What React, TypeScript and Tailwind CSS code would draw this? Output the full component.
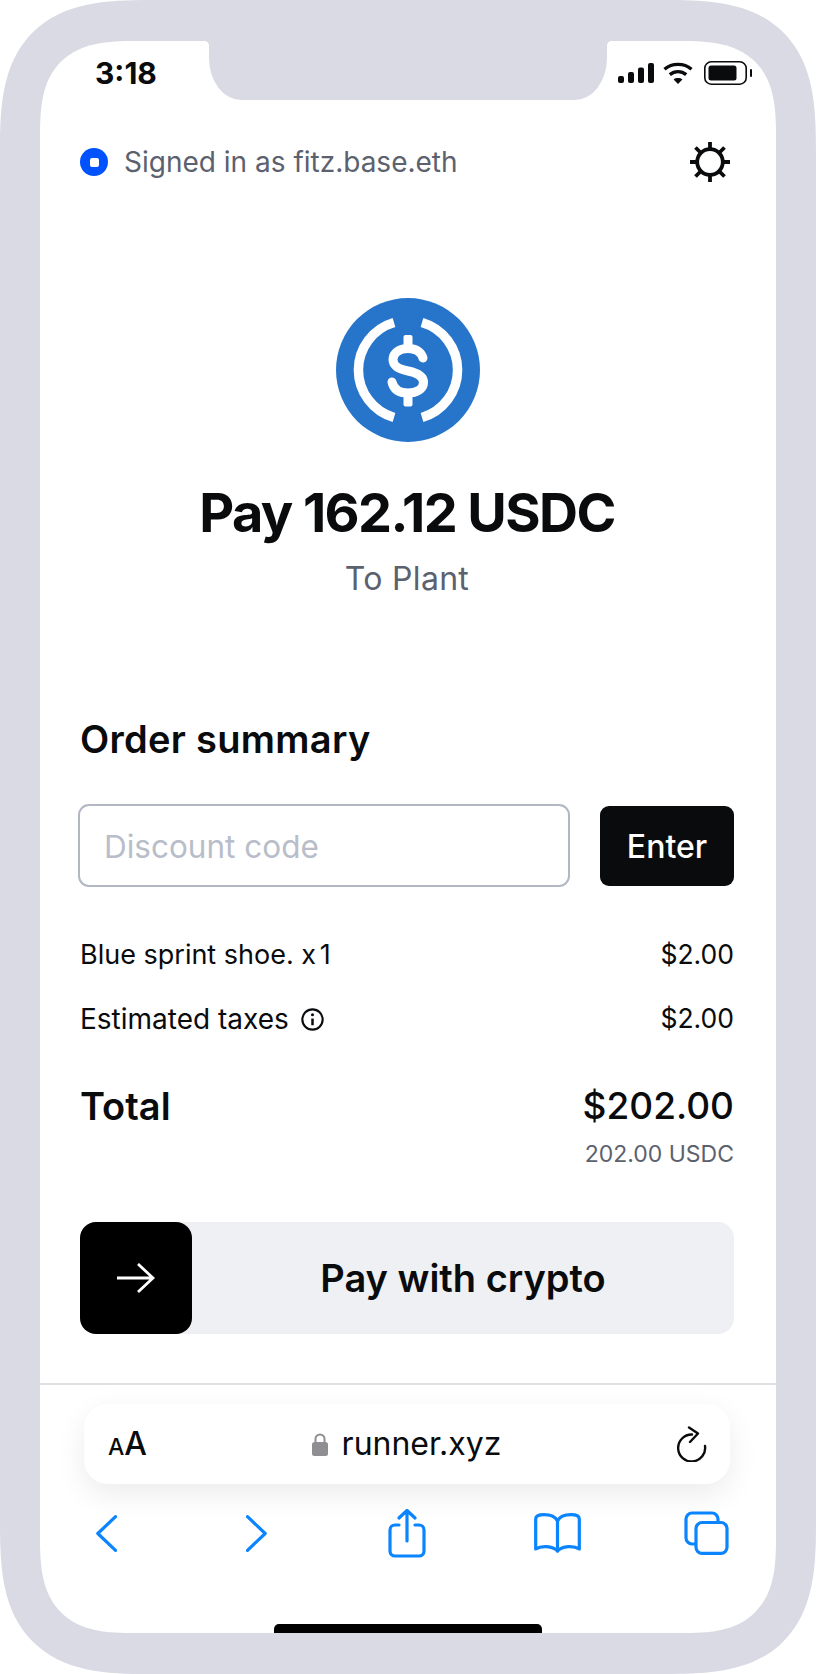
const F = { fontFamily: 'Inter, "Liberation Sans", sans-serif' };

function Signal() {
  return (
    <svg width="36" height="20" viewBox="0 0 36 20" fill="#0a0b0d">
      <rect x="0" y="13" width="6" height="7" rx="2" />
      <rect x="10" y="9" width="6" height="11" rx="2" />
      <rect x="20" y="4.5" width="6" height="15.5" rx="2" />
      <rect x="30" y="0" width="6" height="20" rx="2" />
    </svg>
  );
}
function Wifi() {
  return (
    <svg width="30" height="22" viewBox="0 0 30 22" fill="none" stroke="#0a0b0d" strokeWidth="3.4">
      <path d="M1.5 7.2C9 .8 21 .8 28.5 7.2" />
      <path d="M6.8 12.6C11.5 8.6 18.5 8.6 23.2 12.6" />
      <path d="M15 22 L10.6 17.5 C13 15.6 17 15.6 19.4 17.5 Z" fill="#0a0b0d" stroke="none" />
    </svg>
  );
}
function Battery() {
  return (
    <svg width="48" height="24" viewBox="0 0 48 24" fill="none">
      <rect x="0.8" y="0.8" width="41.4" height="22.4" rx="6.5" stroke="#0a0b0d" strokeWidth="1.6" />
      <rect x="4.5" y="4.5" width="28" height="15" rx="2.5" fill="#0a0b0d" />
      <rect x="46" y="8" width="2" height="8" rx="1" fill="#0a0b0d" />
    </svg>
  );
}
function Sun() {
  return (
    <svg width="40" height="40" viewBox="0 0 40 40" fill="none" stroke="#0a0b0d" strokeWidth="3.8">
      <circle cx="20" cy="20" r="12.8" />
      <path d="M20 0v7M20 33v7M0 20h7M33 20h7M5.5 5.5l4.5 4.5M30 30l4.5 4.5M34.5 5.5L30 10M10 30l-4.5 4.5" />
    </svg>
  );
}
function Usdc() {
  return (
    <svg width="144" height="144" viewBox="0 0 144 144" fill="none">
      <circle cx="72" cy="72" r="72" fill="#2775ca" />
      <path d="M58 24.5A49.5 49.5 0 0 0 58 119.5" stroke="#fff" strokeWidth="9.5" />
      <path d="M86 24.5A49.5 49.5 0 0 1 86 119.5" stroke="#fff" strokeWidth="9.5" />
      <path d="M87 60C85 54 80 50.5 72 50.5C63 50.5 57 55 57 61.5C57 68 62 71 72 73C82 75 87.5 78 87.5 84.5C87.5 91 80.5 95 72 95C63 95 57.5 91 56 84" stroke="#fff" strokeWidth="9" strokeLinecap="round" />
      <rect x="67.5" y="37" width="9" height="12" rx="2" fill="#fff" />
      <rect x="67.5" y="96.5" width="9" height="12" rx="2" fill="#fff" />
    </svg>
  );
}
function Info() {
  return (
    <svg width="23" height="23" viewBox="0 0 24 24" fill="none" stroke="#0a0b0d" strokeWidth="2.2">
      <circle cx="12" cy="12" r="10.6" />
      <path d="M12 11v7" strokeWidth="2.6" />
      <circle cx="12" cy="7" r="1.6" fill="#0a0b0d" stroke="none" />
    </svg>
  );
}
function Arrow() {
  return (
    <svg width="38" height="30" viewBox="0 0 38 30" fill="none" stroke="#fff" strokeWidth="2.8">
      <path d="M0 15h36M21 1l15 14-15 14" />
    </svg>
  );
}
function Lock() {
  return (
    <svg width="16" height="23" viewBox="0 0 16 23" fill="none">
      <path d="M3.5 11V6a4.5 4.5 0 0 1 9 0V11" stroke="#8e8e93" strokeWidth="2" />
      <rect x="0" y="9" width="16" height="14" rx="2.5" fill="#8e8e93" />
    </svg>
  );
}
function Reload() {
  return (
    <svg width="30" height="36" viewBox="0 0 30 36" fill="none" stroke="#0a0b0d" strokeWidth="2.4" strokeLinecap="round" strokeLinejoin="round">
      <path d="M15 8.5A13.5 13.5 0 1 0 28 20" />
      <path d="M12 1.5L21 7.5 13 16" />
    </svg>
  );
}
const BLUE = '#0a84ff';
function Back() {
  return (
    <svg width="21" height="37" viewBox="0 0 21 37" fill="none" stroke={BLUE} strokeWidth="3.2" strokeLinecap="round" strokeLinejoin="round">
      <path d="M19.5 1.7L1.8 18.5 19.5 35.3" />
    </svg>
  );
}
function Forward() {
  return (
    <svg width="21" height="37" viewBox="0 0 21 37" fill="none" stroke={BLUE} strokeWidth="3.2" strokeLinecap="round" strokeLinejoin="round">
      <path d="M1.5 1.7L19.2 18.5 1.5 35.3" />
    </svg>
  );
}
function Share() {
  return (
    <svg width="38" height="49" viewBox="0 0 38 49" fill="none" stroke={BLUE} strokeWidth="3.2" strokeLinecap="round" strokeLinejoin="round">
      <path d="M11 16H7a5 5 0 0 0-5 5v21a5 5 0 0 0 5 5h24a5 5 0 0 0 5-5V21a5 5 0 0 0-5-5h-4" />
      <path d="M19 32V2M11 9l8-7.5L27 9" />
    </svg>
  );
}
function Book() {
  return (
    <svg width="47" height="40" viewBox="0 0 47 40" fill="none" stroke={BLUE} strokeWidth="3.2" strokeLinecap="round" strokeLinejoin="round">
      <path d="M23.5 8C21 3 15 1.7 10 1.7C5.5 1.7 1.7 3 1.7 6V36C7 32.5 18.5 32.5 23.5 38C28.5 32.5 40 32.5 45.3 36V6C45.3 3 41.5 1.7 37 1.7C32 1.7 26 3 23.5 8Z" />
      <path d="M23.5 8V38" />
    </svg>
  );
}
function Tabs() {
  return (
    <svg width="45" height="44" viewBox="0 0 45 44" fill="none" stroke={BLUE} strokeWidth="3.2">
      <path d="M11.5 33H8a6 6 0 0 1-6-6V8a6 6 0 0 1 6-6h20a6 6 0 0 1 6 6v3.5" />
      <rect x="12" y="11.5" width="31" height="30.8" rx="6" />
    </svg>
  );
}

export default function App() {
  return (
    <div style={F} className="w-[816px] h-[1674px] bg-white text-[#0a0b0d]">
      <div className="w-full h-full bg-[#d9dae4] rounded-[150px] [corner-shape:superellipse(1.5)] pt-[41px] pb-[41px] px-[40px]">
        <div className="relative h-full bg-white rounded-[96px] [corner-shape:superellipse(1.5)] overflow-hidden flex flex-col">
          {/* Notch */}
          <div className="absolute left-[169px] top-0 w-[398px] h-[59px] bg-[#d9dae4] rounded-bl-[32px_42px] rounded-br-[32px_42px]" />
          <div className="absolute left-[165px] top-0 w-[4px] h-[4px] bg-[radial-gradient(circle_at_0_100%,transparent_3.5px,#d9dae4_4px)]" />
          <div className="absolute left-[567px] top-0 w-[4px] h-[4px] bg-[radial-gradient(circle_at_100%_100%,transparent_3.5px,#d9dae4_4px)]" />
          {/* Status bar */}
          <div className="h-[60px] flex items-center justify-between pl-[55px] pr-[24px] pt-[1px] mt-[1px]">
            <span className="text-[30px] font-bold leading-none">3:18</span>
            <div className="flex items-center">
              <Signal />
              <div className="ml-[9px]"><Wifi /></div>
              <div className="ml-[11px]"><Battery /></div>
            </div>
          </div>
          {/* Main content */}
          <div className="flex flex-col pl-[40px] pr-[42px] flex-1">
            <div className="flex items-center justify-between mt-[40px] h-[40px]">
              <div className="flex items-center gap-[16px]">
                <div className="w-[28px] h-[28px] rounded-full bg-[#0052ff] flex items-center justify-center">
                  <div className="w-[9px] h-[9px] rounded-[2px] bg-white" />
                </div>
                <span className="text-[28px] leading-none text-[#5b616e]">Signed in as fitz.base.eth</span>
              </div>
              <div className="mr-[4px]"><Sun /></div>
            </div>
            <div className="flex flex-col items-center mt-[116px]">
              <div className="ml-[2px]"><Usdc /></div>
              <h1 className="mt-[38px] text-[54px] leading-[66px] font-bold tracking-[-1.6px]">Pay 162.12 USDC</h1>
              <p className="mt-[14px] text-[32px] leading-[38px] tracking-[0.3px] text-[#5b616e]">To Plant</p>
            </div>
            <h2 className="mt-[119px] text-[38px] leading-[44px] font-semibold tracking-[0.3px]">Order summary</h2>
            <div className="flex items-center justify-between -ml-[2px] mt-[43px]">
              <div className="w-[492px] h-[83px] border-2 border-[#b1b7c3] rounded-[11px] flex items-center px-[24px] pt-[3px]">
                <span className="text-[31.5px] text-[#b8bdc9]">Discount code</span>
              </div>
              <div className="w-[134px] h-[80px] bg-[#0a0b0d] rounded-[9px] flex items-center justify-center pt-[2px]">
                <span className="text-white text-[32px] font-medium">Enter</span>
              </div>
            </div>
            <div className="flex items-center justify-between h-[34px] mt-[51px] text-[27px]">
              <span>Blue sprint shoe. <span className="tracking-[-2px]">x 1</span></span>
              <span className="text-[26.5px]">$2.00</span>
            </div>
            <div className="flex items-center justify-between h-[34px] mt-[30px]">
              <div className="flex items-center gap-[12px]">
                <span className="text-[28px]">Estimated taxes</span>
                <Info />
              </div>
              <span className="text-[26.5px]">$2.00</span>
            </div>
            <div className="flex items-center justify-between h-[44px] mt-[48px]">
              <span className="font-semibold text-[38px]">Total</span>
              <span className="font-medium text-[37px]">$202.00</span>
            </div>
            <div className="text-right text-[23px] leading-[28px] mt-[12px] text-[#5b616e]">202.00 USDC</div>
            <div className="h-[112px] mt-[54px] rounded-[16px] bg-[#eef0f3] flex items-center">
              <div className="w-[112px] h-[112px] rounded-[16px] bg-black flex items-center justify-center">
                <Arrow />
              </div>
              <span className="flex-1 text-center text-[38px] font-semibold">Pay with crypto</span>
            </div>
          </div>
          {/* Browser chrome */}
          <div className="h-[250px] border-t-2 border-[#e0e0e4] relative flex flex-col">
            <div className="ml-[44px] mr-[46px] mt-[19px] h-[80px] rounded-[24px] bg-white shadow-[0_10px_30px_rgba(0,0,0,0.08)] flex items-center justify-between pl-[24px] pr-[23px]">
              <span className="text-[32px] leading-none font-medium flex items-baseline"><span className="text-[23px]">A</span>A</span>
              <div className="flex items-center gap-[14px] mr-[11px]">
                <Lock />
                <span className="text-[32px] leading-none">runner.xyz</span>
              </div>
              <Reload />
            </div>
            <div className="flex items-center mt-[24px] h-[50px]">
              <div className="ml-[56px]"><Back /></div>
              <div className="ml-[129px]"><Forward /></div>
              <div className="ml-[121px]"><Share /></div>
              <div className="ml-[108px]"><Book /></div>
              <div className="ml-[103px]"><Tabs /></div>
            </div>
            <div className="absolute bottom-0 left-[234px] w-[268px] h-[9px] bg-black rounded-t-[5px]" />
          </div>
        </div>
      </div>
    </div>
  );
}
